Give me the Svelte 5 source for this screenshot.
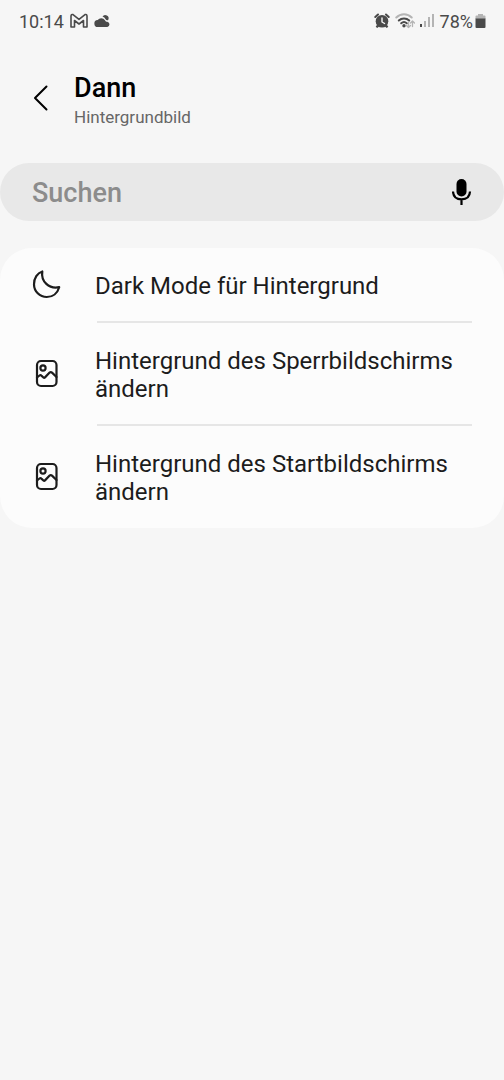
<script>
  let query = "";

  const actions = [
    { icon: "moon", label: "Dark Mode für Hintergrund" },
    { icon: "image", label: "Hintergrund des Sperrbildschirms ändern" },
    { icon: "image", label: "Hintergrund des Startbildschirms ändern" }
  ];

  $: visible = actions.filter((a) => a.label.toLowerCase().includes(query.trim().toLowerCase()));
</script>

<div class="screen">
  <div class="status">
    <div class="group left">
      <span>10:14</span>
      <svg class="mail" width="18" height="16" viewBox="0 0 18 16">
        <path d="M1 14V3Q1.200 1 3 1.600L9 6.400l6-4.800Q16.800 1 17 3V14h-3.500V7.500L9 11 4.500 7.500V14z" />
      </svg>
      <svg class="solid" width="16" height="14" viewBox="0 0 16 14">
        <path d="M4 13a3.500 3.500 0 0 1-.3-7A4.500 4.500 0 0 1 11 6.200c.6 1 1.200 1.500 2.300 1.500a2.700 2.700 0 0 1 0 5.300z" />
        <path d="M8.500 2.600a3.300 3.300 0 0 1 5.700 3.300c-1 .7-2 .4-2.600-.6A5.500 5.500 0 0 0 8.500 2.600z" />
      </svg>
    </div>
    <div class="group">
      <svg width="16" height="16" viewBox="0 0 16 16">
        <path class="fill" d="M3.200 11.500l2 2-2 1.500-1.500-1.200zM12.800 11.500l-2 2 2 1.500 1.500-1.200z" />
        <circle class="fill" cx="8" cy="8.300" r="6.300" />
        <path class="line" d="M1.300 4 4 1.500M14.700 4 12 1.500" />
        <path class="hand" d="M8 5v4l2.600 1.500" />
      </svg>
      <svg width="20" height="18" viewBox="0 0 20 18">
        <path class="faint" d="M1.300 5.500a10.800 10.800 0 0 1 15.400 0" />
        <path class="line" d="M3.800 8.500a7.500 7.500 0 0 1 10.400 0M6.200 11.300a4.200 4.200 0 0 1 5.600 0" />
        <circle class="fill" cx="9" cy="13.700" r="1.700" />
        <path class="arrows" d="M13.500 10v5.500m-2-2 2 2 2-2M17.500 14.500V9m-2 2 2-2 2 2" />
      </svg>
      <svg width="15" height="16" viewBox="0 0 15 16">
        <rect class="fill" x="0" y="11" width="2" height="3" />
        <path class="pale" d="M4 8h2v6H4zM8 4h2v10H8zM12 1h2v13h-2z" />
      </svg>
      <span class="percent">78%</span>
      <svg width="11" height="16" viewBox="0 0 11 16">
        <path class="pale" d="M3 1h5v1.500h1.500Q10.500 2.500 10.500 3.500V6H.5V3.500Q.5 2.500 1.500 2.500H3z" />
        <path class="fill" d="M.5 5.500h10V14q0 1-1 1h-8q-1 0-1-1z" />
      </svg>
    </div>
  </div>

  <header>
    <button class="back" aria-label="Zurück">
      <svg width="16" height="26" viewBox="0 0 16 26">
        <path d="M13.500 1.500 2 13l11.500 11.500" />
      </svg>
    </button>
    <div>
      <h1>Dann</h1>
      <p>Hintergrundbild</p>
    </div>
  </header>

  <div class="search">
    <input type="text" placeholder="Suchen" aria-label="Suchen" bind:value={query} />
    <button class="mic" aria-label="Spracheingabe">
      <svg width="20" height="28" viewBox="0 0 20 28">
        <rect x="4.500" y="1" width="10" height="17.500" rx="5" />
        <path d="M1 13.500C1.200 18.500 4.500 21.300 9.500 21.300s8.300-2.800 8.500-7.800M9.500 21.300V27" />
      </svg>
    </button>
  </div>

  <ul>
    {#each visible as action}
      <li>
        <button class="row">
          {#if action.icon === "moon"}
            <svg width="30" height="30" viewBox="0 0 30 30">
              <path d="M10.300 2.500C8.700 12.500 17 20.300 27.200 18.200C25.500 24.300 20.500 28 14.800 28C7.700 28 2 22.300 2 15.200C2 9.200 5.300 4 10.300 2.500Z" />
            </svg>
          {:else}
            <svg width="30" height="30" viewBox="0 0 30 30">
              <rect x="5" y="3" width="19.500" height="25" rx="4" />
              <circle cx="11" cy="10" r="2.600" />
              <path d="M5 19.500l2.500-2q1-.8 1.900.1l2 1.900q.8.700 1.600-.1l4.600-4.800q1.200-1.100 2.400 0L24.500 19" />
            </svg>
          {/if}
          <span>{action.label}</span>
        </button>
      </li>
    {/each}
  </ul>
</div>

<style>
  :global(body) {
    background: #f6f6f6;
  }

  .screen {
    font-family: Roboto, sans-serif;
    color: #1c1c1c;
  }

  button {
    border: none;
    background: none;
    padding: 0;
    font-family: inherit;
    color: inherit;
    cursor: pointer;
  }

  svg {
    display: block;
    flex: none;
    fill: none;
    stroke-linecap: round;
    stroke-linejoin: round;
  }

  .status {
    display: flex;
    align-items: center;
    justify-content: space-between;
    height: 42px;
    padding: 0 18px 0 19px;
    font-size: 18px;
    color: #4a4a4a;
  }

  .group {
    display: flex;
    align-items: center;
    gap: 5px;
  }

  .left {
    gap: 6px;
  }

  .status svg {
    stroke-width: 2;
  }

  .status .mail {
    stroke-width: 1.6;
  }

  .mail,
  .line {
    stroke: #4a4a4a;
  }

  .solid,
  .fill {
    fill: #4a4a4a;
  }

  .hand {
    stroke: #f6f6f6;
    stroke-width: 1.4;
  }

  .faint,
  .arrows {
    stroke: #b4b4b4;
  }

  .arrows {
    stroke-width: 1.3;
  }

  .pale {
    fill: #b4b4b4;
  }

  .percent {
    margin-right: -3px;
  }

  header {
    display: flex;
    align-items: center;
    gap: 24px;
    padding: 30px 32px 33px;
  }

  .back {
    padding: 0 1px;
    margin-bottom: 6px;
  }

  .back svg {
    stroke: #000;
    stroke-width: 2;
  }

  h1 {
    margin: 0;
    font-size: 27px;
    line-height: 32px;
    font-weight: 500;
    color: #000;
  }

  p {
    margin: 0;
    font-size: 17px;
    line-height: 26px;
    color: #666;
  }

  .search {
    display: flex;
    align-items: center;
    height: 58px;
    padding: 0 32px;
    border-radius: 29px;
    background: #e8e8e8;
  }

  input {
    flex: 1;
    min-width: 0;
    padding: 2px 0 0;
    border: none;
    outline: none;
    background: none;
    font: 500 27px Roboto, sans-serif;
    color: #1c1c1c;
  }

  input::placeholder {
    color: #8c8c8c;
    opacity: 1;
  }

  .mic svg {
    fill: #000;
  }

  .mic path {
    fill: none;
    stroke: #000;
    stroke-width: 2.2;
    stroke-linecap: butt;
  }

  ul {
    list-style: none;
    margin: 27px 0 0;
    padding: 0;
    border-radius: 32px;
    background: #fcfcfc;
    overflow: hidden;
  }

  li + li::before {
    content: "";
    display: block;
    height: 2px;
    margin: -1px 32px 0 97px;
    background: #e6e6e6;
  }

  .row {
    display: flex;
    align-items: center;
    gap: 33px;
    width: 100%;
    padding: 24px 32px 22px;
    font-size: 24px;
    line-height: 28px;
    text-align: left;
  }

  .row svg {
    margin: -3px 0 1px;
    stroke: #1c1c1c;
    stroke-width: 2.2;
  }
</style>
